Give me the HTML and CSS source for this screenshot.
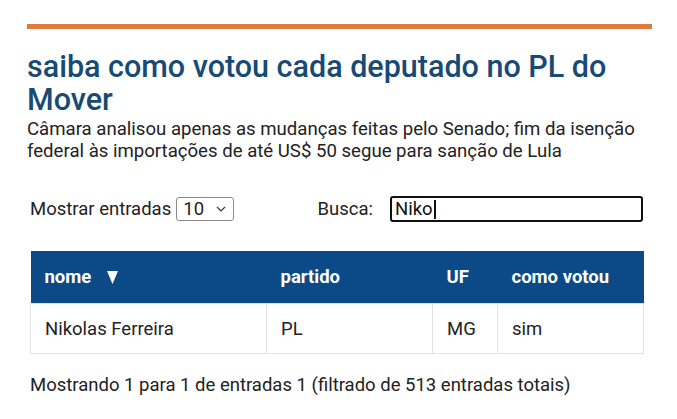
FILE: index.html
```html
<!DOCTYPE html>
<html lang="pt-BR">
<head>
<meta charset="utf-8">
<title>saiba como votou cada deputado no PL do Mover</title>
<link rel="stylesheet" href="styles.css">
</head>
<body>
<main class="page">
  <div class="rule"></div>
  <h1 class="title">saiba como votou cada deputado no PL do Mover</h1>
  <p class="dek">Câmara analisou apenas as mudanças feitas pelo Senado; fim da isenção federal às importações de até US$ 50 segue para sanção de Lula</p>

  <section class="widget">
    <div class="controls">
      <label class="length">Mostrar entradas
        <span class="select"><span class="select-val">10</span>
          <svg class="chev" width="10" height="6" viewBox="0 0 10 6"><path d="M1 1l4 4 4-4" fill="none" stroke="#333" stroke-width="1.2"/></svg>
        </span>
      </label>
      <label class="search">Busca:
        <span class="input">Niko<span class="caret"></span></span>
      </label>
    </div>

    <table class="grid">
      <colgroup>
        <col class="c1"><col class="c2"><col class="c3"><col class="c4">
      </colgroup>
      <thead>
        <tr><th><span class="th-sort">nome <svg class="sort" width="11" height="13" viewBox="0 0 11 13"><polygon points="0,0 11,0 5.5,13" fill="#ffffff"/></svg></span></th><th>partido</th><th>UF</th><th>como votou</th></tr>
      </thead>
      <tbody>
        <tr><td>Nikolas Ferreira</td><td>PL</td><td>MG</td><td>sim</td></tr>
      </tbody>
    </table>

    <p class="info">Mostrando 1 para 1 de entradas 1 (filtrado de 513 entradas totais)</p>
  </section>
</main>
</body>
</html>
```

FILE: styles.css
```css
html, body {
  margin: 0;
  padding: 0;
  background: #ffffff;
}

body {
  font-family: Roboto, "Liberation Sans", sans-serif;
  color: #222222;
}

.page {
  width: 625px;
  padding: 24px 0 0 27px;
}

.rule {
  height: 5px;
  background: #e07b3f;
}

.title {
  margin: 21px 0 0 0;
  font-size: 30.5px;
  line-height: 33px;
  font-weight: 500;
  color: #174a75;
}

.dek {
  margin: 2px 0 0 0;
  font-size: 18.6px;
  line-height: 22px;
  color: #222222;
}

.widget {
  padding: 34px 9px 0 3px;
}

.controls {
  display: flex;
  align-items: center;
  justify-content: space-between;
  height: 26px;
  font-size: 18.5px;
}

.length {
  display: flex;
  align-items: center;
  gap: 5px;
}

.select {
  display: inline-flex;
  align-items: center;
  justify-content: space-between;
  box-sizing: border-box;
  width: 58px;
  height: 24px;
  padding: 0 7px 0 6px;
  border: 1px solid #8a8a8a;
  border-radius: 3px;
  font-size: 18.5px;
}

.chev {
  display: block;
}

.search {
  display: flex;
  align-items: center;
  gap: 17px;
}

.input {
  display: inline-flex;
  align-items: center;
  box-sizing: border-box;
  width: 253px;
  height: 26px;
  padding: 0 3px;
  border: 2px solid #111111;
  border-radius: 3px;
  font-size: 18.5px;
  color: #111111;
}

.caret {
  display: inline-block;
  width: 2px;
  height: 19px;
  background: #111111;
  margin-left: 1px;
}

.grid {
  margin-top: 29px;
  width: 613px;
  border-collapse: collapse;
  table-layout: fixed;
  font-size: 18.5px;
}

.c1 { width: 236px; }
.c2 { width: 166px; }
.c3 { width: 65px; }
.c4 { width: 146px; }

.grid th {
  background: #0b4a86;
  color: #ffffff;
  font-weight: 700;
  text-align: left;
  height: 52px;
  padding: 0 14px;
}

.th-sort {
  display: inline-flex;
  align-items: center;
  gap: 16px;
}

.sort {
  display: block;
}

.grid td {
  height: 49px;
  padding: 0 14px;
  border: 1px solid #e2e2e2;
  color: #222222;
}

.info {
  margin: 20px 0 0 0;
  font-size: 18.5px;
  line-height: 22px;
  color: #222222;
}
```
